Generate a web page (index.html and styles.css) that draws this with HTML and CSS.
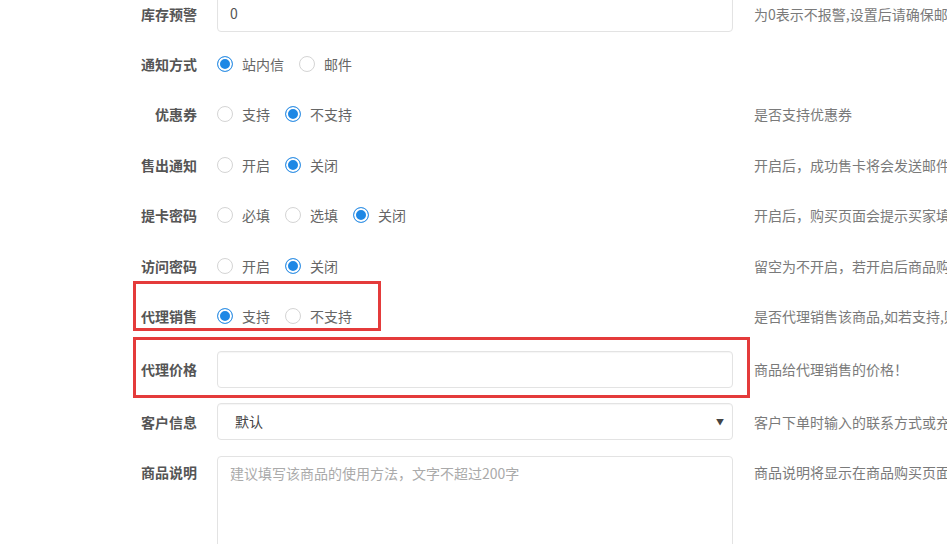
FILE: index.html
```html
<!DOCTYPE html>
<html lang="zh-CN">
<head>
<meta charset="utf-8">
<title>商品设置</title>
<link rel="stylesheet" href="styles.css">
</head>
<body>
<div class="page">
  <form class="form">
    <div class="row row-input">
      <label class="lbl">库存预警</label>
      <div class="ctl"><div class="input">0</div></div>
      <div class="help">为0表示不报警,设置后请确保邮箱已填写</div>
    </div>
    <div class="row row-radio">
      <label class="lbl">通知方式</label>
      <div class="ctl radios">
        <span class="opt"><i class="radio on"></i>站内信</span>
        <span class="opt"><i class="radio"></i>邮件</span>
      </div>
      <div class="help"></div>
    </div>
    <div class="row row-radio">
      <label class="lbl">优惠券</label>
      <div class="ctl radios">
        <span class="opt"><i class="radio"></i>支持</span>
        <span class="opt"><i class="radio on"></i>不支持</span>
      </div>
      <div class="help">是否支持优惠券</div>
    </div>
    <div class="row row-radio">
      <label class="lbl">售出通知</label>
      <div class="ctl radios">
        <span class="opt"><i class="radio"></i>开启</span>
        <span class="opt"><i class="radio on"></i>关闭</span>
      </div>
      <div class="help">开启后，成功售卡将会发送邮件通知</div>
    </div>
    <div class="row row-radio">
      <label class="lbl">提卡密码</label>
      <div class="ctl radios">
        <span class="opt"><i class="radio"></i>必填</span>
        <span class="opt"><i class="radio"></i>选填</span>
        <span class="opt"><i class="radio on"></i>关闭</span>
      </div>
      <div class="help">开启后，购买页面会提示买家填写提卡密码</div>
    </div>
    <div class="row row-radio">
      <label class="lbl">访问密码</label>
      <div class="ctl radios">
        <span class="opt"><i class="radio"></i>开启</span>
        <span class="opt"><i class="radio on"></i>关闭</span>
      </div>
      <div class="help">留空为不开启，若开启后商品购买需输入密码</div>
    </div>
    <div class="row row-radio row-last-radio">
      <label class="lbl">代理销售</label>
      <div class="ctl radios">
        <span class="opt"><i class="radio on"></i>支持</span>
        <span class="opt"><i class="radio"></i>不支持</span>
      </div>
      <div class="help">是否代理销售该商品,如若支持,则代理可销售</div>
    </div>
    <div class="row row-input">
      <label class="lbl">代理价格</label>
      <div class="ctl"><div class="input"></div></div>
      <div class="help">商品给代理销售的价格！</div>
    </div>
    <div class="row row-input">
      <label class="lbl">客户信息</label>
      <div class="ctl"><div class="input select">默认<span class="caret">▼</span></div></div>
      <div class="help">客户下单时输入的联系方式或充值账号</div>
    </div>
    <div class="row row-area">
      <label class="lbl">商品说明</label>
      <div class="ctl"><div class="textarea">建议填写该商品的使用方法，文字不超过200字</div></div>
      <div class="help">商品说明将显示在商品购买页面</div>
    </div>
  </form>
  <div class="mark mark-1"></div>
  <div class="mark mark-2"></div>
</div>
</body>
</html>
```

FILE: styles.css
```css
html, body {
  margin: 0;
  padding: 0;
  background: #fff;
  overflow: hidden;
}
body {
  width: 947px;
  height: 544px;
  font-family: "Noto Sans CJK SC", "Microsoft YaHei", sans-serif;
  font-size: 14px;
  color: #666;
}
.page {
  position: relative;
  height: 544px;
  overflow: hidden;
}
.form {
  margin-top: -5px;
}
.row {
  display: grid;
  grid-template-columns: 217px 516px 1fr;
  align-items: center;
  margin-bottom: 15.5px;
}
.row-input { height: 37px; }
.row-radio { height: 35px; }
.row:first-child { margin-bottom: 14px; }
.row-last-radio { margin-bottom: 17px; }
.row-input + .row-input { margin-bottom: 16px; }
.row-area { align-items: start; }
.lbl {
  text-align: right;
  padding-right: 20px;
  font-weight: bold;
  color: #555;
  white-space: nowrap;
}
.row-area .lbl { padding-top: 6px; }
.help {
  padding-left: 21px;
  white-space: nowrap;
  overflow: hidden;
  color: #7a7a7a;
}
.row-area .help { padding-top: 6px; }
.input {
  box-sizing: border-box;
  height: 37px;
  border: 1px solid #e3e3e3;
  border-radius: 4px;
  padding: 0 12px;
  line-height: 35px;
  color: #555;
  box-shadow: inset 0 1px 1px rgba(0,0,0,0.04);
}
.select {
  display: flex;
  justify-content: space-between;
  color: #444;
  padding: 0 8px 0 17px;
}
.caret {
  font-size: 8px;
  color: #444;
}
.textarea {
  box-sizing: border-box;
  height: 120px;
  border: 1px solid #e3e3e3;
  border-radius: 4px;
  padding: 5px 12px;
  color: #aaa;
  line-height: 22px;
}
.radios {
  display: flex;
  align-items: center;
  gap: 15px;
}
.opt {
  display: inline-flex;
  align-items: center;
  gap: 9px;
  color: #666;
  white-space: nowrap;
}
.radio {
  box-sizing: border-box;
  width: 16px;
  height: 16px;
  border-radius: 50%;
  border: 1px solid #d4d4d4;
  background: #fff;
}
.radio.on {
  border-color: #3d96e6;
  background: #1e88e5;
  box-shadow: inset 0 0 0 2px #fff;
}
.mark {
  position: absolute;
  border: 3px solid #e43b3b;
  box-sizing: border-box;
}
.mark-1 {
  left: 133px;
  top: 281px;
  width: 248px;
  height: 50px;
}
.mark-2 {
  left: 133px;
  top: 337px;
  width: 617px;
  height: 61px;
}
```
